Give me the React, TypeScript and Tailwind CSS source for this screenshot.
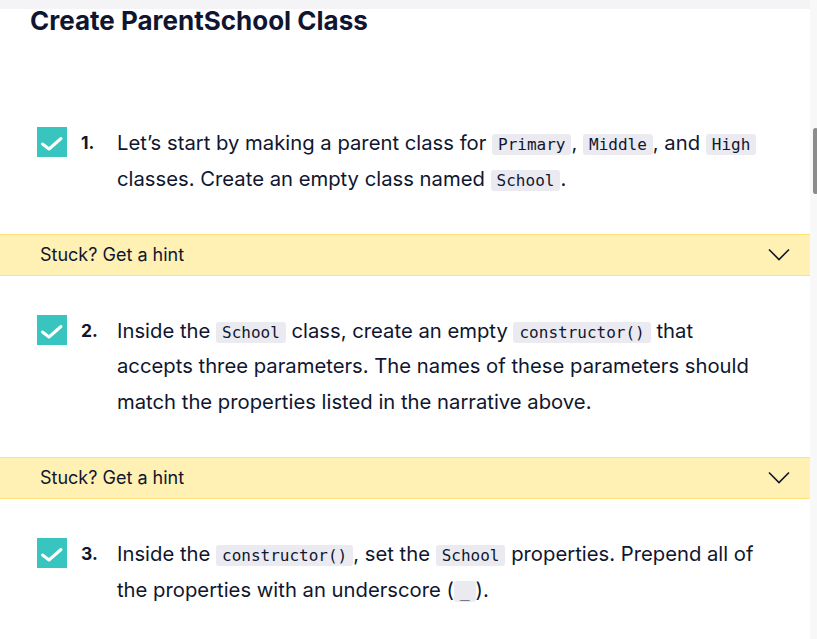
import { Fragment, ReactNode } from "react";

const Code = ({ children }: { children: ReactNode }) => (
  <code className="rounded-[3px] bg-[#eaeaf0] px-[6px] py-[1px] font-['DejaVu_Sans_Mono',monospace] text-[16px] leading-[20px] text-[#10162f]">
    {children}
  </code>
);

function Checkbox() {
  return (
    <div className="mt-[2px] flex h-[30px] w-[30px] shrink-0 items-center justify-center bg-[#38c5bf]">
      <svg width="30" height="30" viewBox="0 0 30 30" fill="none">
        <path
          d="M5.5 17 L12 22 L24 11.5"
          stroke="white"
          strokeWidth="3"
          strokeLinecap="round"
          strokeLinejoin="round"
        />
      </svg>
    </div>
  );
}

function Task({ n, lines }: { n: number; lines: ReactNode[] }) {
  return (
    <li className="flex py-[37px] pl-[37px]">
      <Checkbox />
      <span className="w-[50px] shrink-0 pl-[14px] text-[17.5px] font-bold leading-[35px]">
        {n}.
      </span>
      <p className="text-[20.25px] leading-[35.75px]">
        {lines.map((l, i) => (
          <Fragment key={i}>
            <span className="whitespace-nowrap">{l}</span>
            {i < lines.length - 1 && <br />}
          </Fragment>
        ))}
      </p>
    </li>
  );
}

function Hint() {
  return (
    <div className="flex h-[42px] items-center justify-between border-y border-[#ffe37a] bg-[#fff0b3] pl-[40px] pr-[20px]">
      <span className="text-[18px]">Stuck? Get a hint</span>
      <svg width="22" height="13" viewBox="0 0 22 13" fill="none">
        <path d="M1 1.5 L11 11.5 L21 1.5" stroke="#10162f" strokeWidth="1.6" />
      </svg>
    </div>
  );
}

export default function App() {
  return (
    <div className="flex h-[639px] w-[817px] overflow-hidden bg-white font-['Inter',sans-serif] text-[#10162f]">
      <main className="w-[810px] shrink-0">
        <div className="h-[9px] bg-[#f4f4f6]" />
        <h1 className="pl-[30px] text-[26px] font-bold leading-[24px]">
          Create ParentSchool Class
        </h1>
        <ol className="mt-[55px]">
          <Task
            n={1}
            lines={[
              <>
                Let’s start by making a parent class for <Code>Primary</Code>,{" "}
                <Code>Middle</Code>, and <Code>High</Code>
              </>,
              <>
                classes. Create an empty class named <Code>School</Code>.
              </>,
            ]}
          />
          <Hint />
          <Task
            n={2}
            lines={[
              <>
                Inside the <Code>School</Code> class, create an empty{" "}
                <Code>constructor()</Code> that
              </>,
              "accepts three parameters. The names of these parameters should",
              "match the properties listed in the narrative above.",
            ]}
          />
          <Hint />
          <Task
            n={3}
            lines={[
              <>
                Inside the <Code>constructor()</Code>, set the{" "}
                <Code>School</Code> properties. Prepend all of
              </>,
              <>
                the properties with an underscore (<Code>_</Code>).
              </>,
            ]}
          />
        </ol>
      </main>
      <div className="relative w-[7px] bg-[#f8f8f8]">
        <div className="absolute left-[3px] top-[128px] h-[66px] w-[5px] rounded-[3px] bg-[#8c8c8c]" />
      </div>
    </div>
  );
}
